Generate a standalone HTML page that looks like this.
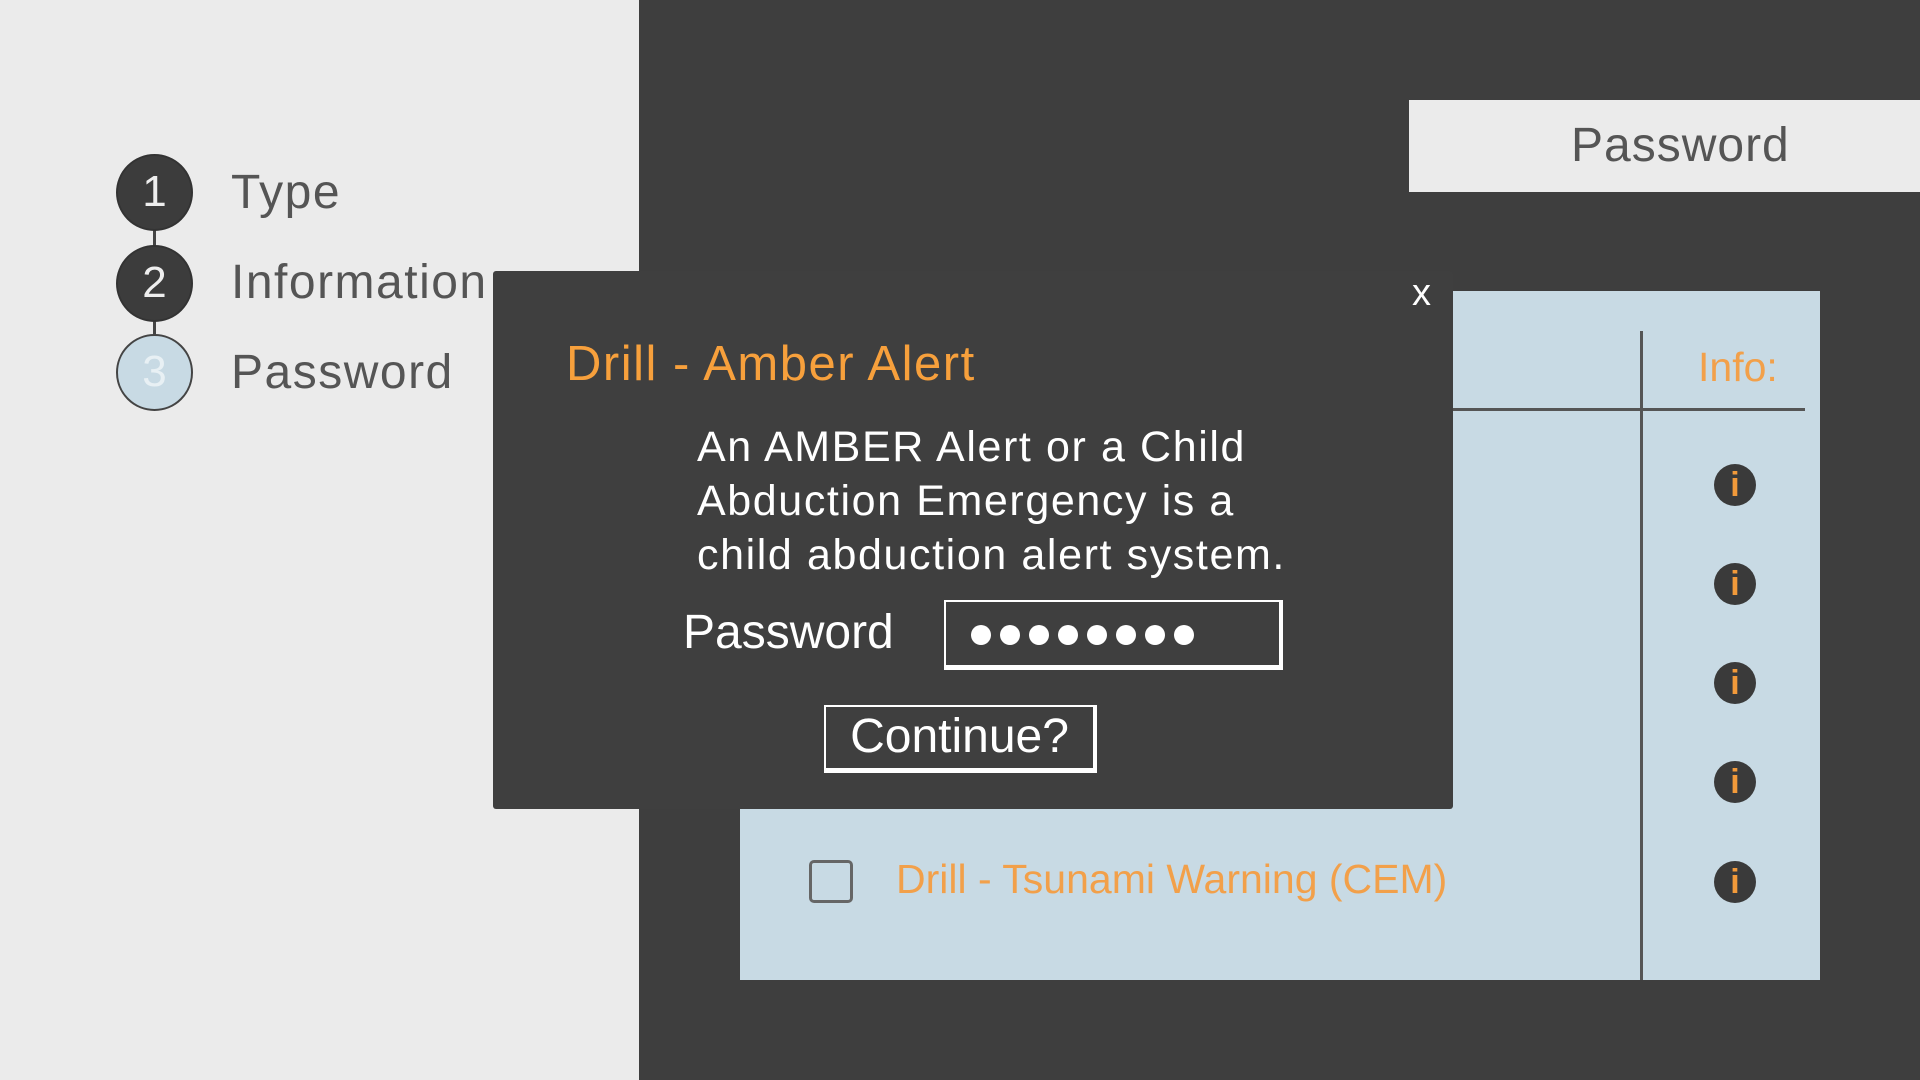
<!DOCTYPE html>
<html><head><style>
*{margin:0;padding:0;box-sizing:border-box}
body{width:1920px;height:1080px;overflow:hidden;background:#3e3e3e;font-family:"Liberation Sans",sans-serif;position:relative}
.abs{position:absolute}
.left{left:0;top:0;width:639px;height:1080px;background:#ebebeb}
.circ{position:absolute;left:116px;width:77px;height:77px;border-radius:50%;background:#3c3c3c;border:2px solid #333;color:#eee;font-size:44px;text-align:center;line-height:72px}
.step{position:absolute;left:231px;font-size:48px;color:#555;line-height:60px;letter-spacing:1.5px}
.info{position:absolute;left:1714px;width:42px;height:42px;border-radius:50%;background:#3a3a3a;color:#f29a3a;font-size:34px;font-weight:bold;text-align:center;line-height:42px}
.dot{display:inline-block;width:20px;height:20px;border-radius:50%;background:#fff;margin-right:9px}
</style></head><body>
<div class="abs left"></div>
<div class="abs" style="left:153px;top:220px;width:3px;height:190px;background:#444"></div>
<div class="circ" style="top:154px">1</div>
<div class="circ" style="top:245px">2</div>
<div class="circ" style="top:334px;background:#c8dae4;color:#e8f0f4;border-color:#444">3</div>
<div class="step" style="top:163px">Type</div>
<div class="step" style="top:253px">Information</div>
<div class="step" style="top:343px">Password</div>

<div class="abs" style="left:1409px;top:100px;width:511px;height:92px;background:#ebebeb;color:#555;font-size:48px;line-height:92px;padding-left:162px;letter-spacing:1px">Password</div>

<div class="abs" style="left:740px;top:291px;width:1080px;height:689px;background:#c8dae4"></div>
<div class="abs" style="left:1640px;top:331px;width:3px;height:649px;background:#555"></div>
<div class="abs" style="left:1400px;top:408px;width:405px;height:3px;background:#555"></div>
<div class="abs" style="left:1698px;top:344px;font-size:41px;color:#f2a04a">Info:</div>
<div class="info" style="top:464px">i</div>
<div class="info" style="top:563px">i</div>
<div class="info" style="top:662px">i</div>
<div class="info" style="top:761px">i</div>
<div class="info" style="top:861px">i</div>
<div class="abs" style="left:809px;top:860px;width:44px;height:43px;border:3px solid #666;border-radius:5px"></div>
<div class="abs" style="left:896px;top:856px;font-size:41px;color:#f2a04a">Drill - Tsunami Warning (CEM)</div>

<div class="abs" style="left:493px;top:271px;width:960px;height:538px;background:#3f3f3f;border-radius:3px"></div>
<div class="abs" style="left:1412px;top:272px;font-size:38px;color:#fff">x</div>
<div class="abs" style="left:566px;top:336px;font-size:49px;color:#f7a03c;letter-spacing:1.5px">Drill - Amber Alert</div>
<div class="abs" style="left:697px;top:420px;font-size:43px;line-height:54px;color:#fff;letter-spacing:1.6px">An AMBER Alert or a Child<br>Abduction Emergency is a<br>child abduction alert system.</div>
<div class="abs" style="left:683px;top:605px;font-size:48px;color:#fff">Password</div>
<div class="abs" style="left:944px;top:600px;width:339px;height:70px;border:2px solid #fff;border-right-width:4px;border-bottom-width:5px;padding-left:25px;padding-top:23px;line-height:0"><span class="dot"></span><span class="dot"></span><span class="dot"></span><span class="dot"></span><span class="dot"></span><span class="dot"></span><span class="dot"></span><span class="dot"></span></div>
<div class="abs" style="left:824px;top:705px;width:273px;height:68px;border:2px solid #fff;border-right-width:4px;border-bottom-width:5px;color:#fff;font-size:48px;text-align:center;line-height:60px">Continue?</div>
</body></html>
